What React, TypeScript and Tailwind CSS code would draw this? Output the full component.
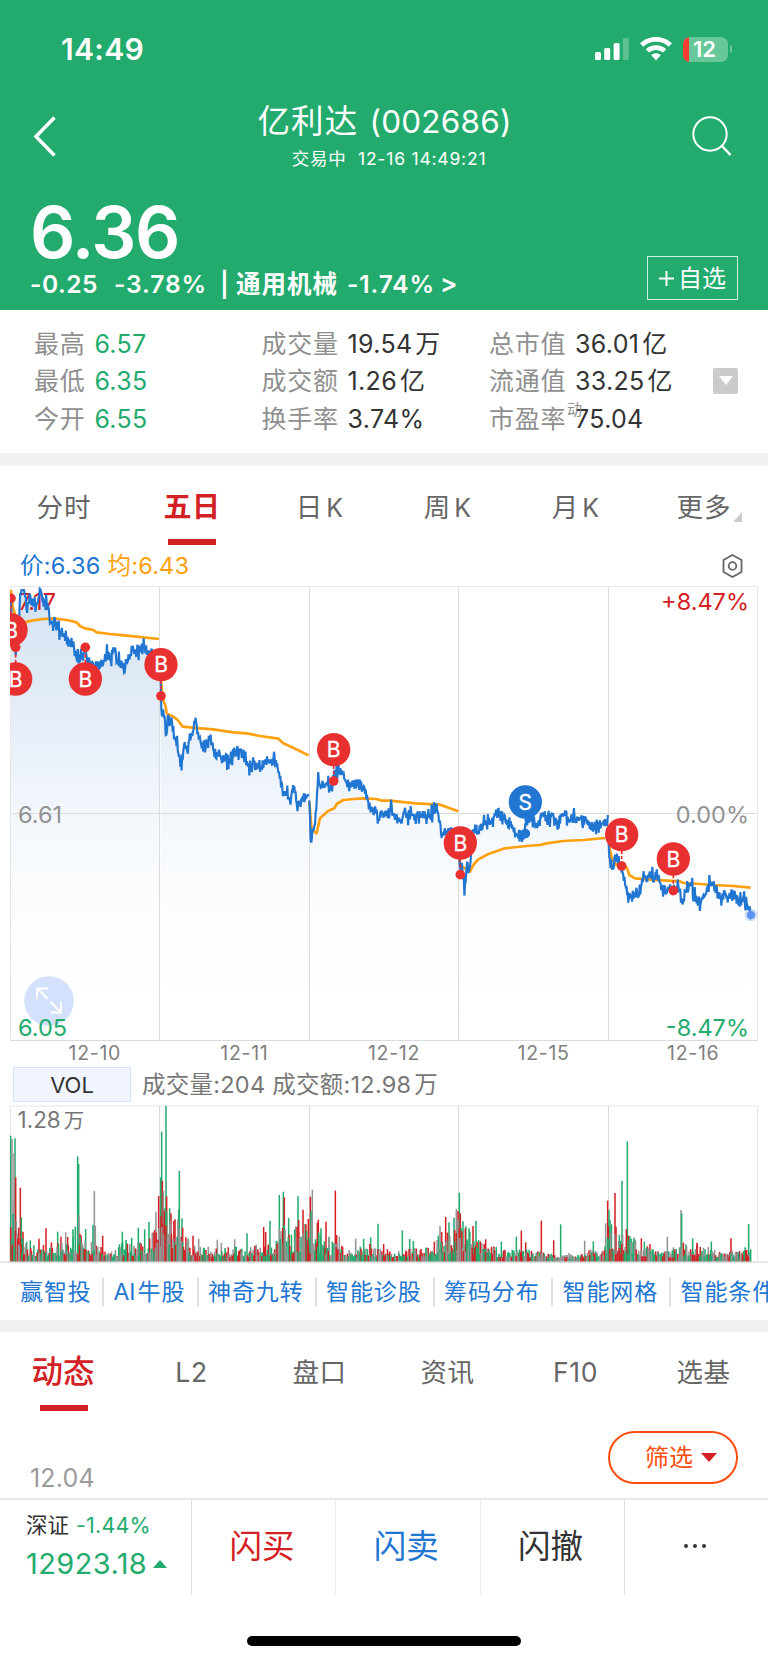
import React from "react";

type Pt = [number, number];
type Tone = "g" | "r" | "n";

const GREEN = "#23ab6e";
const RED = "#d32024";
const BLUE = "#2176d2";
const TONES: Record<Tone, string> = { g: GREEN, r: RED, n: "#949494" };

function makeRandom(seed: number) {
  let s = seed;
  return () => {
    s = (s * 1664525 + 1013904223) % 4294967296;
    return s / 4294967296;
  };
}

/* Price series, one polyline per trading day, in thirds of a pixel */
const days: Pt[][] = [
  [[32, 90], [36, 150], [42, 215], [47, 250], [53, 200], [58, 150], [60, 60], [72, 60], [82, 115], [90, 75], [100, 105], [108, 95], [112, 108], [120, 52], [128, 85], [135, 105], [140, 100], [148, 138], [155, 160], [163, 150], [175, 178], [185, 190], [195, 195], [205, 213], [213, 232], [225, 230], [235, 272], [245, 262], [256, 240], [265, 268], [280, 290], [300, 292], [305, 285], [320, 250], [332, 265], [343, 242], [352, 270], [362, 275], [373, 302], [382, 268], [395, 245], [410, 240], [420, 245], [430, 232], [440, 245], [452, 255], [478, 260]],
  [[482, 330], [484, 430], [492, 430], [498, 505], [504, 445], [515, 460], [523, 500], [533, 530], [544, 590], [552, 525], [562, 528], [570, 505], [580, 482], [587, 450], [596, 495], [604, 525], [615, 530], [628, 512], [640, 540], [655, 555], [668, 563], [682, 572], [695, 560], [712, 537], [725, 555], [735, 557], [745, 588], [760, 590], [775, 585], [785, 592], [797, 575], [810, 578], [825, 572], [832, 590], [840, 630], [850, 675], [862, 675], [870, 692], [882, 653], [893, 718], [905, 685], [915, 688], [926, 672]],
  [[928, 700], [933, 822], [938, 790], [946, 740], [955, 618], [960, 655], [970, 648], [982, 637], [992, 665], [1005, 612], [1015, 592], [1025, 610], [1035, 630], [1045, 648], [1058, 640], [1075, 637], [1085, 655], [1100, 680], [1112, 718], [1125, 725], [1138, 755], [1150, 725], [1160, 743], [1174, 715], [1190, 742], [1205, 750], [1215, 722], [1220, 738], [1238, 735], [1265, 732], [1290, 735], [1312, 716], [1324, 788], [1340, 782], [1375, 800]],
  [[1378, 870], [1387, 900], [1394, 955], [1400, 895], [1405, 910], [1412, 880], [1418, 780], [1440, 783], [1458, 752], [1475, 745], [1490, 735], [1505, 732], [1518, 750], [1535, 765], [1550, 795], [1570, 800], [1580, 750], [1590, 745], [1605, 763], [1620, 750], [1628, 730], [1640, 735], [1655, 747], [1670, 753], [1688, 737], [1715, 742], [1730, 742], [1745, 745], [1760, 750], [1775, 765], [1790, 777], [1805, 763], [1824, 735]],
  [[1826, 820], [1830, 870], [1837, 900], [1848, 865], [1855, 872], [1865, 895], [1872, 925], [1880, 950], [1885, 990], [1890, 962], [1897, 980], [1910, 970], [1920, 960], [1932, 915], [1940, 925], [1960, 917], [1975, 930], [1990, 953], [2005, 960], [2020, 962], [2035, 955], [2047, 1000], [2058, 952], [2075, 945], [2090, 1000], [2105, 992], [2118, 972], [2132, 932], [2145, 958], [2160, 978], [2180, 982], [2195, 975], [2210, 984], [2225, 998], [2235, 990], [2243, 1008], [2252, 1032]],
];

const averages: Pt[][] = [
  [[33, 60], [38, 110], [50, 150], [75, 157], [95, 152], [130, 147], [160, 145], [200, 150], [230, 157], [240, 168], [255, 175], [280, 180], [290, 187], [330, 192], [380, 197], [477, 207]],
  [[483, 330], [488, 385], [497, 410], [500, 430], [520, 440], [533, 450], [548, 470], [600, 475], [640, 478], [700, 487], [740, 490], [780, 498], [835, 506], [850, 520], [900, 543], [920, 554], [926, 554]],
  [[928, 695], [935, 780], [950, 790], [960, 745], [985, 722], [1003, 715], [1010, 702], [1030, 690], [1060, 687], [1090, 685], [1130, 687], [1145, 692], [1170, 692], [1245, 700], [1320, 704], [1375, 724]],
  [[1375, 830], [1380, 885], [1410, 905], [1420, 885], [1435, 868], [1465, 852], [1515, 835], [1580, 828], [1620, 825], [1640, 820], [1690, 813], [1750, 810], [1815, 804]],
  [[1826, 800], [1830, 840], [1837, 870], [1848, 884], [1880, 892], [1888, 915], [1905, 925], [1940, 928], [2000, 932], [2040, 934], [2050, 939], [2100, 942], [2140, 945], [2200, 948], [2252, 953]],
];

const markers: { x: number; y: number; dot: number; kind: "B" | "S" }[] = [
  { x: 33, y: 180, dot: 85, kind: "B" },
  { x: 47, y: 327, dot: 232, kind: "B" },
  { x: 256, y: 327, dot: 232, kind: "B" },
  { x: 483, y: 284, dot: 378, kind: "B" },
  { x: 1001, y: 539, dot: 633, kind: "B" },
  { x: 1381, y: 819, dot: 914, kind: "B" },
  { x: 1576, y: 696, dot: 791, kind: "S" },
  { x: 1865, y: 794, dot: 888, kind: "B" },
  { x: 2020, y: 867, dot: 962, kind: "B" },
];

function interpolate(pts: Pt[], x: number) {
  for (let i = 1; i < pts.length; i++) {
    if (x <= pts[i][0]) {
      const [x0, y0] = pts[i - 1];
      const [x1, y1] = pts[i];
      return y0 + ((y1 - y0) * (x - x0)) / (x1 - x0);
    }
  }
  return pts[pts.length - 1][1];
}

function ticks(pts: Pt[], seed: number): Pt[] {
  const rnd = makeRandom(seed);
  const out: Pt[] = [];
  const end = pts[pts.length - 1][0];
  let flip = 1;
  for (let x = pts[0][0]; x < end; x += 1.9) {
    flip = rnd() < 0.62 ? -flip : flip;
    const r = rnd();
    const amp = r > 0.93 ? 28 : r > 0.68 ? 17 : r > 0.32 ? 9 : 0;
    out.push([x, Math.max(50, interpolate(pts, x) + flip * amp)]);
  }
  out.push(pts[pts.length - 1]);
  return out;
}

const toPath = (pts: Pt[]) => pts.map(([x, y], i) => `${i ? "L" : "M"}${x.toFixed(1)} ${y.toFixed(1)}`).join("");

const series = days.map((d, i) => ticks(d, 17 + i * 31));
const pricePath = series.map(toPath).join("");
const areaPath = series.map((s) => `${toPath(s)}L${s[s.length - 1][0]} 1411L${s[0][0]} 1411Z`).join("");

/* Volume envelope and individual peaks */
const envelope: Pt[] = [[32, 330], [44, 200], [52, 120], [66, 80], [80, 60], [100, 50], [130, 50], [160, 52], [190, 60], [210, 60], [235, 80], [255, 65], [285, 60], [310, 40], [345, 34], [365, 55], [400, 46], [440, 55], [465, 110], [478, 185], [492, 190], [510, 150], [535, 120], [550, 80], [575, 60], [600, 40], [650, 35], [700, 36], [750, 42], [790, 45], [830, 60], [840, 125], [870, 90], [900, 100], [935, 120], [960, 80], [1000, 60], [1040, 36], [1065, 16], [1090, 55], [1120, 40], [1150, 40], [1170, 28], [1210, 25], [1240, 36], [1270, 40], [1300, 38], [1315, 70], [1340, 90], [1375, 140], [1390, 110], [1430, 75], [1470, 45], [1510, 30], [1550, 30], [1580, 30], [1650, 18], [1700, 20], [1740, 12], [1770, 30], [1810, 40], [1826, 130], [1850, 90], [1870, 80], [1890, 70], [1930, 45], [1970, 30], [2010, 26], [2050, 45], [2090, 45], [2140, 35], [2170, 20], [2200, 30], [2250, 42], [2255, 10]];

const peaks: [number, number, Tone][] = [
  [32, 227, "g"], [36, 237, "n"], [42, 280, "n"], [45, 235, "g"], [47, 352, "r"], [61, 383, "r"], [64, 472, "g"], [56, 503, "r"], [69, 515, "r"], [91, 541, "g"], [117, 536, "r"], [138, 505, "r"], [173, 515, "g"], [183, 530, "r"], [197, 517, "n"], [203, 531, "r"], [219, 508, "g"], [226, 500, "g"], [233, 289, "g"], [236, 312, "g"], [237, 465, "n"], [240, 522, "r"], [257, 507, "g"], [279, 494, "g"], [283, 393, "n"], [286, 497, "n"], [308, 527, "r"], [367, 515, "g"], [378, 540, "g"], [395, 533, "g"], [415, 503, "g"], [434, 508, "g"], [447, 486, "g"], [449, 536, "r"], [468, 455, "n"], [476, 408, "r"], [482, 352, "g"], [485, 215, "g"], [487, 362, "r"], [490, 393, "n"], [498, 138, "g"], [500, 409, "r"], [509, 445, "g"], [513, 460, "r"], [525, 478, "r"], [538, 333, "g"], [536, 448, "g"], [546, 475, "g"], [548, 503, "r"], [565, 537, "n"], [579, 527, "r"], [596, 536, "n"], [652, 539, "n"], [664, 549, "n"], [704, 538, "n"], [741, 520, "g"], [791, 501, "r"], [797, 516, "r"], [810, 482, "g"], [838, 405, "g"], [850, 395, "g"], [853, 412, "r"], [866, 474, "g"], [887, 499, "n"], [894, 409, "g"], [896, 480, "r"], [909, 449, "r"], [925, 477, "r"], [931, 410, "r"], [937, 389, "n"], [933, 453, "g"], [952, 488, "r"], [955, 479, "r"], [963, 505, "g"], [978, 485, "r"], [1006, 392, "r"], [1010, 525, "r"], [1018, 530, "n"], [987, 530, "g"], [1067, 536, "n"], [1091, 536, "g"], [1112, 532, "g"], [1134, 491, "g"], [1151, 552, "r"],
  [1207, 511, "g"], [1229, 537, "g"], [1240, 543, "g"], [1303, 545, "r"], [1315, 527, "g"], [1320, 498, "n"], [1325, 516, "r"], [1337, 471, "r"], [1347, 487, "g"], [1362, 473, "g"], [1369, 447, "n"], [1374, 453, "r"], [1378, 398, "g"], [1381, 460, "r"], [1389, 484, "g"], [1396, 505, "r"], [1419, 498, "r"], [1428, 482, "g"], [1457, 538, "r"], [1504, 545, "g"], [1549, 530, "g"], [1564, 512, "r"], [1577, 547, "r"], [1624, 482, "r"], [1661, 541, "r"], [1682, 493, "g"], [1754, 542, "n"], [1780, 544, "g"], [1817, 490, "n"], [1823, 422, "r"], [1827, 450, "g"], [1830, 479, "g"], [1845, 399, "r"], [1848, 500, "r"], [1858, 525, "g"], [1866, 362, "g"], [1879, 508, "r"], [1882, 244, "g"], [1886, 527, "r"], [1894, 536, "g"], [1903, 532, "n"], [1924, 535, "r"], [1933, 545, "g"], [1950, 552, "r"], [2002, 530, "n"], [2020, 562, "n"], [2043, 450, "n"], [2045, 460, "g"], [2050, 548, "r"], [2078, 535, "g"], [2091, 548, "r"], [2134, 545, "g"], [2193, 535, "r"], [2246, 492, "g"],
];

const bars: [number, number, Tone][] = (() => {
  const rnd = makeRandom(91);
  const out: [number, number, Tone][] = [];
  for (let x = 32; x < 2254; x += 2.4) {
    const h = 8 + interpolate(envelope, x) * (0.15 + 0.85 * Math.pow(rnd(), 1.4));
    const c = rnd();
    out.push([x, 605 - h, c < 0.33 ? "g" : c < 0.67 ? "r" : "n"]);
  }
  return [...out, ...peaks].sort((a, b) => a[1] - b[1]);
})();

const gridX = [159.5, 309.5, 458.5, 608.5];
const dates = ["12-10", "12-11", "12-12", "12-15", "12-16"];

function StatusBar() {
  return (
    <div className="flex h-[98px] items-center justify-between pr-[36px] pl-[61px]">
      <span className="text-[30px] leading-none font-semibold tracking-[0.3px]">14:49</span>
      <div className="flex items-center gap-[11px]">
        <svg width="34" height="24" viewBox="0 0 34 24" fill="#fff">
          <rect x="0" y="15" width="6" height="8" rx="1.5" />
          <rect x="9.2" y="11" width="6" height="12" rx="1.5" />
          <rect x="18.6" y="6" width="6" height="17" rx="1.5" />
          <rect x="27.8" y="1" width="6" height="22" rx="1.5" opacity=".25" />
        </svg>
        <svg width="32" height="24" viewBox="0 0 32 24" fill="#fff">
          <path d="M16 0C9.800 0 4.100 2.400 0 6.300L3.300 9.700C6.600 6.500 11.100 4.700 16 4.700S25.400 6.500 28.700 9.700L32 6.300C27.900 2.400 22.200 0 16 0Z" />
          <path d="M16 8.200C12 8.200 8.400 9.700 5.700 12.200L9.100 15.600C10.900 13.900 13.300 12.900 16 12.900S21.100 13.900 22.900 15.600L26.300 12.200C23.600 9.700 20 8.200 16 8.200Z" />
          <path d="M16 16.300C14.200 16.300 12.500 17 11.200 18.100L16 23.500L20.800 18.100C19.500 17 17.800 16.300 16 16.300Z" />
        </svg>
        <div className="flex items-center gap-[2px]">
          <div className="flex h-[25px] w-[45px] items-center overflow-hidden rounded-[7px] bg-[#67c799]">
            <div className="h-full w-[6px] bg-[#fa3b30]" />
            <span className="pl-[4px] text-[22px] leading-none font-semibold">12</span>
          </div>
          <div className="h-[8px] w-[2px] rounded-r-full bg-[#67c799]" />
        </div>
      </div>
    </div>
  );
}

function Header() {
  return (
    <header className="h-[309.500px] bg-[#23ab6e] text-white">
      <StatusBar />
      <div className="flex h-[85.500px] items-start justify-between pr-[36px] pl-[33px]">
        <svg className="mt-[18px]" width="42" height="42" viewBox="0 0 42 42" fill="none" stroke="#fff" strokeWidth="3.500">
          <path d="M21.500 1.500L3 20.500L21.500 39.500" />
        </svg>
        <div className="flex flex-col items-center pl-[4px]">
          <h1 className="mt-[5px] flex items-center text-[32.500px] leading-[38px] font-normal tracking-[1.200px]">
            亿利达
            <span className="ml-[11px] text-[31.500px] tracking-[0.200px]">(002686)</span>
          </h1>
          <p className="mt-[8px] ml-[9px] text-[17.500px] leading-[20px] tracking-[0.800px] whitespace-pre">交易中  12-16 14:49:21</p>
        </div>
        <svg className="mt-[18px]" width="42" height="42" viewBox="0 0 42 42" fill="none" stroke="#fff" strokeWidth="2">
          <circle cx="20" cy="18" r="16.700" />
          <path d="M31.500 29.500L40.500 39" strokeWidth="2.500" />
        </svg>
      </div>
      <div className="flex h-[126px] items-end justify-between pr-[30px] pb-[6px] pl-[30px]">
        <div className="flex flex-col">
          <span className="text-[71px] leading-[64px] font-semibold tracking-[-1.400px]">6.36</span>
          <div className="flex h-[40px] items-center text-[24.500px] leading-[30px] font-semibold tracking-[0.500px] whitespace-pre">
            <span className="w-[84px]">-0.25</span>
            <span className="w-[106px] tracking-[0.900px]">-3.78%</span>
            <span className="w-[16px]">|</span>
            <span className="w-[111px] font-bold tracking-[1px]">通用机械</span>
            <span className="w-[93px] tracking-[0.900px]">-1.74%</span>
            <span className="text-[26px]">&gt;</span>
          </div>
        </div>
        <button className="mb-[4px] flex h-[44px] w-[91px] items-center justify-center gap-[4px] border border-white/80 pt-[2px] text-[24px] leading-none">
          <svg width="15" height="15" viewBox="0 0 15 15" stroke="#fff" strokeWidth="2">
            <path d="M7.500 0V15M0 7.500H15" />
          </svg>
          <span>自选</span>
        </button>
      </div>
    </header>
  );
}

function Stat({ label, value, unit, tone, note }: { label: string; value: string; unit?: string; tone?: "green"; note?: string }) {
  return (
    <div className="flex h-[37.500px] items-center">
      <span className="relative text-[25px] leading-none tracking-[0.700px] text-[#8f8f8f]">
        {label}
        {note && <span className="absolute -top-[5px] left-[78px] text-[15px] leading-none tracking-normal">{note}</span>}
      </span>
      <span
        className={
          tone === "green"
            ? "ml-[9px] text-[25px] leading-none tracking-[0.300px] text-[#23ab6e]"
            : "ml-[9px] text-[25px] leading-none tracking-[0.300px] text-[#333]"
        }
      >
        {value}
      </span>
      {unit && <span className="ml-[3px] text-[25px] leading-none text-[#333]">{unit}</span>}
    </div>
  );
}

function Stats() {
  return (
    <section className="flex h-[143px] items-start pt-[16px] pl-[34px]">
      <div className="w-[227.500px]">
        <Stat label="最高" value="6.57" tone="green" />
        <Stat label="最低" value="6.35" tone="green" />
        <Stat label="今开" value="6.55" tone="green" />
      </div>
      <div className="w-[227.500px]">
        <Stat label="成交量" value="19.54" unit="万" />
        <Stat label="成交额" value="1.26" unit="亿" />
        <Stat label="换手率" value="3.74%" />
      </div>
      <div className="w-[224px]">
        <Stat label="总市值" value="36.01" unit="亿" />
        <Stat label="流通值" value="33.25" unit="亿" />
        <Stat label="市盈率" value="75.04" note="动" />
      </div>
      <div className="mt-[42px] flex h-[26px] w-[25px] items-center justify-center rounded-[2px] bg-[#cbcbcb]">
        <svg width="14" height="9" viewBox="0 0 14 9" fill="#fff">
          <path d="M0 0H14L7 9Z" />
        </svg>
      </div>
    </section>
  );
}

function PeriodTabs() {
  const items = ["分时", "五日", "日K", "周K", "月K", "更多"];
  return (
    <nav className="grid h-[81.500px] grid-cols-6">
      {items.map((t) => {
        const on = t === "五日";
        const latin = t.endsWith("K");
        return (
          <div key={t} className="relative flex flex-col items-center">
            <span
              className={
                on
                  ? "mt-[24px] text-[28px] leading-[34px] font-bold tracking-[0.500px] text-[#d32024]"
                  : "mt-[24px] text-[26.500px] leading-[34px] tracking-[1px] text-[#666]"
              }
            >
              {latin ? t[0] : t}
              {latin && <span className="ml-[3px] text-[25px]">K</span>}
            </span>
            {on && <span className="mt-[15px] h-[6px] w-[48px] bg-[#d32024]" />}
            {t === "更多" && (
              <svg className="absolute top-[46px] right-[26px]" width="9" height="10" viewBox="0 0 9 10" fill="#ccc">
                <path d="M9 0V10H0Z" />
              </svg>
            )}
          </div>
        );
      })}
    </nav>
  );
}

function PriceChart() {
  return (
    <svg width="768" height="480" viewBox="0 584 768 480" className="block font-[Inter]">
      <defs>
        <linearGradient id="fade" gradientUnits="userSpaceOnUse" x1="0" y1="50" x2="0" y2="1411">
          <stop offset="0" stopColor="#d3e3f1" />
          <stop offset=".25" stopColor="#e3ecf7" />
          <stop offset=".5" stopColor="#f3f7fc" />
          <stop offset=".75" stopColor="#fdfefe" />
          <stop offset="1" stopColor="#fff" />
        </linearGradient>
        <clipPath id="plot">
          <rect x="30" y="48" width="2243" height="1365" />
        </clipPath>
      </defs>
      <g transform="translate(0 570) scale(.333333)" clipPath="url(#plot)">
        <path d={areaPath} fill="url(#fade)" />
      </g>
      <g stroke="#dcdcdf" fill="none">
        <rect x="10.500" y="586.500" width="747" height="454" stroke="#e6e6e6" />
        {gridX.map((x) => (
          <path key={x} d={`M${x} 587V1040`} />
        ))}
        <path d="M11 813.500H757M11 1040.500H757" />
      </g>
      <g fontSize="23.500">
        <text x="18" y="609.500" fill={RED}>7.17</text>
        <text x="18" y="822.500" fill="#929292">6.61</text>
        <g textAnchor="end">
          <text x="749" y="609.500" fill={RED}>+8.47%</text>
          <text x="749" y="822.500" fill="#929292">0.00%</text>
          <text x="749" y="1035.500" fill={GREEN}>-8.47%</text>
        </g>
      </g>
      <circle cx="49" cy="1001" r="24.800" fill="#d3e1fd" />
      <path d="M37 999V988.500H48M37.500 988.500L47.500 998.500M61 1002V1012.500H50.500M61 1012.500L50.500 1002" fill="none" stroke="#fff" strokeWidth="2" />
      <text x="18" y="1035.500" fill={GREEN} fontSize="23.500">6.05</text>
      <g transform="translate(0 570) scale(.333333)" clipPath="url(#plot)">
        <path d={averages.map(toPath).join("")} fill="none" stroke="#ffa00f" strokeWidth="8" strokeLinejoin="round" />
        <path d={pricePath} fill="none" stroke={BLUE} strokeWidth="6.500" strokeLinejoin="miter" strokeMiterlimit="3" />
        {markers.map((m) => {
          const fill = m.kind === "S" ? BLUE : "#e83031";
          return (
            <g key={m.x}>
              <path d={`M${m.x} ${m.y}V${m.dot}`} stroke={fill} strokeWidth="5" strokeDasharray="10 6" />
              <circle cx={m.x} cy={m.dot} r="14.500" fill={fill} />
              <circle cx={m.x} cy={m.y} r="50" fill={fill} />
              <text x={m.x} y={m.y + 23} textAnchor="middle" fontSize="63" fill="#fff" stroke="#fff" strokeWidth="1">{m.kind}</text>
            </g>
          );
        })}
        <circle cx="2253" cy="1035" r="19" fill="#5f95f0" opacity=".3" />
        <circle cx="2253" cy="1035" r="12" fill="#5c92f0" />
      </g>
      <g fontSize="19.500" letterSpacing=".7" fill="#808080" textAnchor="middle">
        {dates.map((d, i) => (
          <text key={d} x={94.8 + i * 149.6} y="1060">{d}</text>
        ))}
      </g>
    </svg>
  );
}

function VolumeChart() {
  return (
    <svg width="768" height="159" viewBox="0 1104 768 159" className="block">
      <g stroke="#dcdcdf" fill="none">
        <path d="M10.500 1262V1106H757.500V1262" stroke="#e6e6e6" />
        {gridX.map((x) => (
          <path key={x} d={`M${x} 1106V1261`} />
        ))}
      </g>
      <text x="17.500" y="1127.500" fontSize="22.500" fill="#777">
        1.28<tspan dx="3" fontSize="20.500">万</tspan>
      </text>
      <g transform="translate(0 1060) scale(.333333)" strokeWidth="4.600" fill="none">
        {bars.map(([x, y, tone], i) => (
          <path key={i} d={`M${x.toFixed(1)} 605V${y.toFixed(1)}`} stroke={TONES[tone]} />
        ))}
      </g>
      <path d="M0 1262.200H768" stroke="#dedede" strokeWidth="1.500" />
    </svg>
  );
}

function Tools() {
  const items = ["赢智投", "AI牛股", "神奇九转", "智能诊股", "筹码分布", "智能网格", "智能条件单"];
  const widths = ["w-[84px]", "w-[94.5px]", "w-[118px]", "w-[118px]", "w-[118.5px]", "w-[118px]", "w-[150px]"];
  return (
    <div className="flex h-[57px] items-center overflow-hidden pt-[1px] pl-[20px]">
      {items.map((t, i) => (
        <div
          key={t}
          className={`${widths[i]} flex h-[28px] shrink-0 items-center text-[23px] leading-none tracking-[0.900px] whitespace-nowrap text-[#2176d2] ${
            i < 6 ? "border-r-2 border-[#dedede]" : ""
          } ${i > 0 ? "pl-[9.5px]" : ""}`}
        >
          {t === "AI牛股" ? (
            <>
              <span className="mr-[2px] tracking-normal">AI</span>牛股
            </>
          ) : (
            t
          )}
        </div>
      ))}
    </div>
  );
}

function InfoTabs() {
  const items = ["动态", "L2", "盘口", "资讯", "F10", "选基"];
  return (
    <nav className="grid h-[88px] grid-cols-6">
      {items.map((t) => {
        const on = t === "动态";
        return (
          <div key={t} className="flex flex-col items-center">
            <span
              className={
                on
                  ? "mt-[21px] mr-[2px] text-[31.500px] leading-[38px] font-medium text-[#d32024]"
                  : "mt-[21px] mr-[1px] text-[26.500px] leading-[38px] tracking-[0.600px] text-[#666]"
              }
            >
              {t}
            </span>
            {on && <span className="mt-[14px] h-[6px] w-[48px] bg-[#d32024]" />}
          </div>
        );
      })}
    </nav>
  );
}

function BottomBar() {
  return (
    <footer className="border-t-2 border-[#e9e9e9]">
      <div className="flex h-[95px]">
        <div className="flex w-[192px] flex-col border-r border-[#dedede] pl-[26px]">
          <div className="mt-[11px] flex items-center text-[21.500px] leading-[28px]">
            <span className="text-[#333]">深证</span>
            <span className="ml-[7px] text-[21.500px] tracking-[0.200px] text-[#23ab6e]">-1.44%</span>
          </div>
          <div className="mt-[8px] flex items-center text-[29px] leading-[34px] tracking-[0.400px] text-[#23ab6e]">
            12923.18
            <svg className="ml-[6px]" width="14" height="8" viewBox="0 0 14 8" fill="#23ab6e">
              <path d="M7 0L14 8H0Z" />
            </svg>
          </div>
        </div>
        <button className="w-[144px] border-r border-[#ececec] pr-[3px] text-[32.500px] text-[#d32024]">闪买</button>
        <button className="w-[144.500px] border-r border-[#ececec] pr-[3px] text-[32.500px] text-[#2176d2]">闪卖</button>
        <button className="w-[144px] border-r border-[#dedede] pr-[3px] text-[32.500px] text-[#333]">闪撤</button>
        <button className="flex flex-1 items-center justify-center gap-[5px] pr-[2px] pb-[4px]">
          <i className="size-[4px] rounded-full bg-[#333]" />
          <i className="size-[4px] rounded-full bg-[#333]" />
          <i className="size-[4px] rounded-full bg-[#333]" />
        </button>
      </div>
      <div className="flex h-[68px] justify-center pt-[41px]">
        <div className="h-[10px] w-[274px] rounded-full bg-black" />
      </div>
    </footer>
  );
}

export default function App() {
  return (
    <div className="h-[1663px] w-[768px] overflow-hidden bg-white font-[Inter,'Noto_Sans_CJK_SC',sans-serif]">
      <Header />
      <Stats />
      <div className="h-[13px] bg-[#f1f1f1]" />
      <PeriodTabs />
      <div className="flex h-[37px] items-center pt-[1px] pr-[25px] pl-[20px] text-[23.500px] leading-none tracking-[0.200px]">
        <span className="text-[#2176d2]">价:6.36</span>
        <span className="ml-[7px] text-[#ffa00f]">均:6.43</span>
        <svg className="ml-auto" width="21" height="24" viewBox="0 0 20 24" fill="none" stroke="#666" strokeWidth="1.800">
          <path d="M10 1L19 6V18L10 23L1 18V6Z" />
          <circle cx="10" cy="12" r="3.800" />
        </svg>
      </div>
      <PriceChart />
      <div className="flex h-[40px] items-center pt-[1px] pl-[13px]">
        <div className="flex h-[35px] w-[118px] items-center justify-center border border-[#d5e3fb] bg-[#f0f5ff] text-[22px] leading-none text-[#333]">VOL</div>
        <span className="ml-[11px] pt-[1px] text-[23.500px] leading-none tracking-[0.250px] text-[#777]">
          成交量:204 成交额:12.98<span className="ml-[3px]">万</span>
        </span>
      </div>
      <VolumeChart />
      <Tools />
      <div className="h-[12px] bg-[#f1f1f1]" />
      <InfoTabs />
      <div className="flex h-[78px] items-start justify-between pr-[30px] pl-[30px]">
        <span className="mt-[42px] text-[25px] leading-[32px] tracking-[0.200px] text-[#9b9b9b]">12.04</span>
        <button className="mt-[11px] flex h-[53px] w-[130px] items-center rounded-full border-2 border-[#ff4d0d] pt-[1px] pl-[35px] text-[24px] leading-none text-[#ff4d0d]">
          筛选
          <svg className="mb-[2px] ml-[8px]" width="16" height="9" viewBox="0 0 16 9" fill="#d32024">
            <path d="M0 0H16L8 9Z" />
          </svg>
        </button>
      </div>
      <BottomBar />
    </div>
  );
}
